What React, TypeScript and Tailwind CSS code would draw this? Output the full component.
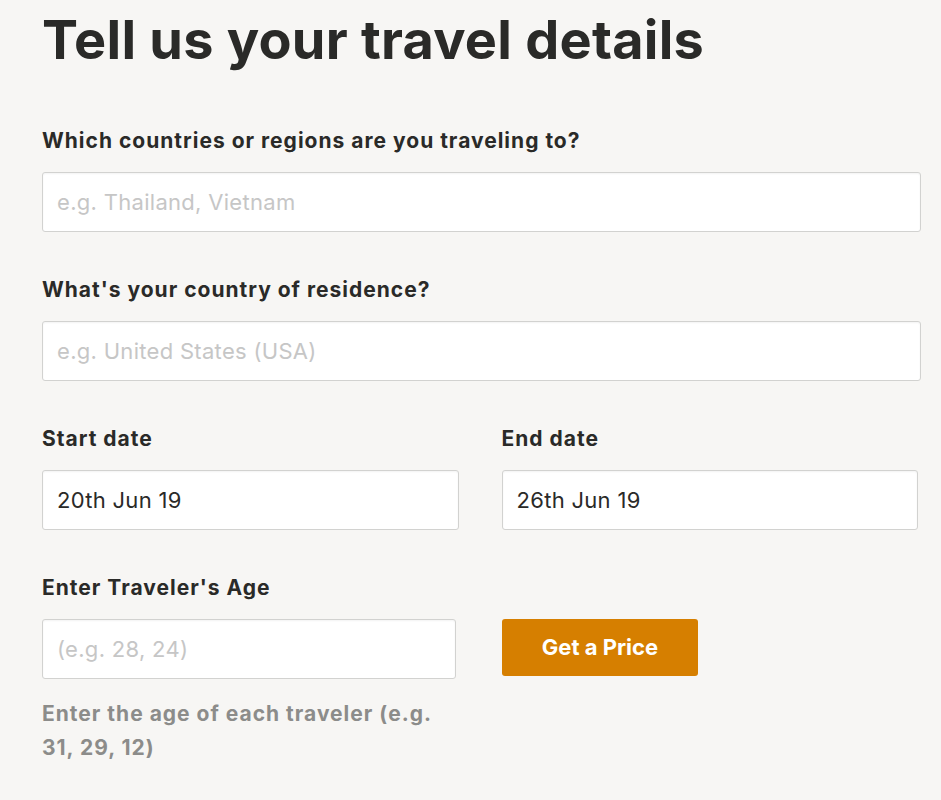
import React from 'react';

const font = { fontFamily: 'Inter, "Noto Sans", sans-serif' };

const Field: React.FC<{ label: string; placeholder?: string; value?: string; className?: string }> = ({
  label,
  placeholder,
  value,
  className = '',
}) => (
  <div className={className}>
    <label className="block text-[21px] leading-[28px] font-bold tracking-[1px] text-[#2a2a28]">{label}</label>
    <input
      readOnly
      defaultValue={value}
      placeholder={placeholder}
      className="mt-[17px] block w-full h-[60px] rounded-[3px] border border-[#d2d2d0] bg-white px-[14px] text-[22px] tracking-[0.3px] text-[#2a2a28] placeholder:text-[#c6c6c6] shadow-[inset_0_1px_2px_rgba(0,0,0,0.05)] outline-none"
    />
  </div>
);

export default function App() {
  return (
    <div className="min-h-screen bg-[#f7f6f4] pl-[42px] pr-[20px] pt-[8px]" style={font}>
      <h1 className="text-[54px] leading-[64px] font-bold text-[#2a2a28] tracking-[0.25px]">
        Tell us your travel details
      </h1>

      <Field
        className="mt-[55px]"
        label="Which countries or regions are you traveling to?"
        placeholder="e.g. Thailand, Vietnam"
      />
      <Field className="mt-[44px]" label="What's your country of residence?" placeholder="e.g. United States (USA)" />

      <div className="mt-[44px] grid grid-cols-2 gap-x-[43px] pr-[3px]">
        <Field label="Start date" value="20th Jun 19" />
        <Field label="End date" value="26th Jun 19" />
      </div>

      <div className="mt-[44px] flex gap-[46px]">
        <div className="w-[414px]">
          <Field label="Enter Traveler's Age" placeholder="(e.g. 28, 24)" />
          <p className="mt-[18px] text-[21px] leading-[34px] font-bold tracking-[1px] text-[#8c8c8a]">
            Enter the age of each traveler (e.g. 31, 29, 12)
          </p>
        </div>
        <div className="pt-[45px]">
          <button className="h-[57px] w-[196px] rounded-[3px] bg-[#d67f00] text-[22px] font-bold text-white">
            Get a Price
          </button>
        </div>
      </div>
    </div>
  );
}
